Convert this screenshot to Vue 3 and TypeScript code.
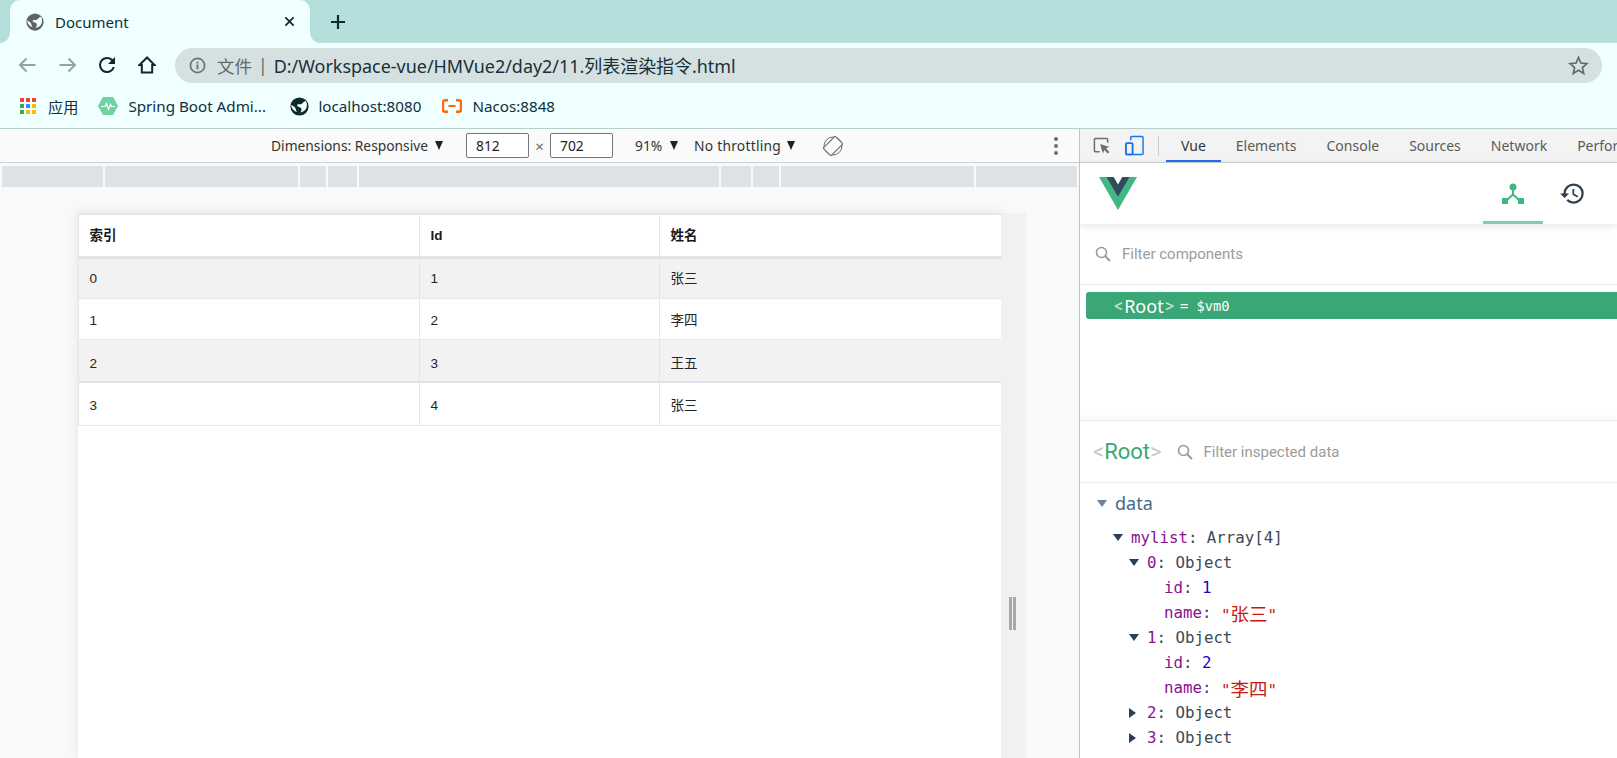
<script setup lang="ts">
interface Row { index: number; id: number; name: string }
const rows: Row[] = [
  { index: 0, id: 1, name: '张三' },
  { index: 1, id: 2, name: '李四' },
  { index: 2, id: 3, name: '王五' },
  { index: 3, id: 4, name: '张三' },
]
const segments = [101, 193, 26, 29, 360, 30, 26, 193, 101]
const tabs = ['Vue', 'Elements', 'Console', 'Sources', 'Network', 'Performance']
</script>

<template>
  <div class="browser">
    <header class="tabstrip">
      <div class="tab">
        <svg class="tab-globe" viewBox="0 0 24 24"><circle cx="12" cy="12" r="11.5" fill="#5f6368" /><path d="M20 5c-3 .5-3.500 2.500-5 3.500-2 1.300-4 .2-5.500 1-1 .6-.5 2 .5 2.500 2 1 4 1 4.500 3 .3 1.500-.5 3-1.500 4.500 2.500-.2 6-2 7.500-5 1.500-3.500 1-7-.5-9.500z" fill="#f0ffff" /><path d="M1.500 10c2 1 4 2 5 3.500s1 4 2.500 5.500c-3.500-1-7-4-7.500-9z" fill="#f0ffff" /></svg>
        <span class="tab-title">Document</span>
        <svg class="tab-close" viewBox="0 0 12 12"><path d="M1.500 1.500l9 9M10.500 1.500l-9 9" stroke="#0b2b2b" stroke-width="1.900" /></svg>
      </div>
      <svg class="new-tab" viewBox="0 0 16 16"><path d="M8 1v14M1 8h14" stroke="#0b2b2b" stroke-width="2.200" /></svg>
    </header>

    <div class="toolbar">
      <svg class="nav back" viewBox="0 0 18 16"><path d="M17.500 8H2M8.500 1.500L2 8l6.500 6.500" fill="none" stroke="#90a5a3" stroke-width="2" /></svg>
      <svg class="nav fwd" viewBox="0 0 18 16"><path d="M.5 8H16M9.500 1.500L16 8l-6.500 6.500" fill="none" stroke="#90a5a3" stroke-width="2" /></svg>
      <svg class="nav reload" viewBox="0 0 24 24"><path d="M17.650 6.350A7.960 7.960 0 0 0 12 4a8 8 0 1 0 7.740 10h-2.080A6 6 0 1 1 12 6c1.660 0 3.140.69 4.220 1.780L13 11h7V4l-2.350 2.350z" fill="#0b2b2b" /></svg>
      <svg class="nav home" viewBox="0 0 18 18"><path d="M9 1.500L1.500 9h2.300v7.500h10.400V9h2.300z" fill="none" stroke="#0b2b2b" stroke-width="2" stroke-linejoin="miter" /></svg>
      <div class="omnibox">
        <svg class="info" viewBox="0 0 18 18"><circle cx="9" cy="9" r="7.500" fill="none" stroke="#6b7473" stroke-width="1.800" /><path d="M9 8v5M9 5v1.800" stroke="#6b7473" stroke-width="2" /></svg>
        <span class="scheme">文件</span><span class="pipe">|</span>
        <span class="url">D:/Workspace-vue/HMVue2/day2/11.列表渲染指令.html</span>
        <svg class="star" viewBox="0 0 24 24"><path d="M12 2.800l2.700 6.400 6.900.6-5.200 4.500 1.600 6.800-6-3.600-6 3.600 1.600-6.800-5.200-4.500 6.900-.6z" fill="none" stroke="#5f6b6a" stroke-width="1.900" /></svg>
      </div>
    </div>

    <nav class="bookmarks">
      <svg class="apps" viewBox="0 0 16 16">
        <g fill="#ea4335"><rect x="0" y="0" width="4" height="4" /><rect x="6" y="0" width="4" height="4" /><rect x="12" y="0" width="4" height="4" /></g>
        <rect x="0" y="6" width="4" height="4" fill="#34a853" /><rect x="6" y="6" width="4" height="4" fill="#4285f4" /><rect x="12" y="6" width="4" height="4" fill="#fbbc05" />
        <rect x="0" y="12" width="4" height="4" fill="#34a853" /><rect x="6" y="12" width="4" height="4" fill="#fbbc05" /><rect x="12" y="12" width="4" height="4" fill="#fbbc05" />
      </svg>
      <span class="bm apps-label">应用</span>
      <svg class="spring" viewBox="0 0 20 18"><path d="M5 0h10l5 9-5 9H5L0 9z" fill="#6dd3a0" /><path d="M3 9.500h4l1.500-3 2 6 2-5 1 2h3.500" fill="none" stroke="#fff" stroke-width="1.200" /></svg>
      <span class="bm spring-label">Spring Boot Admi...</span>
      <svg class="bm-globe" viewBox="0 0 24 24"><circle cx="12" cy="12" r="11.500" fill="#0b2b2b" /><path d="M20 5c-3 .5-3.500 2.500-5 3.500-2 1.300-4 .2-5.500 1-1 .6-.5 2 .5 2.500 2 1 4 1 4.500 3 .3 1.500-.5 3-1.500 4.500 2.500-.2 6-2 7.500-5 1.500-3.500 1-7-.5-9.500z" fill="#f0ffff" /><path d="M1.500 10c2 1 4 2 5 3.500s1 4 2.500 5.500c-3.500-1-7-4-7.500-9z" fill="#f0ffff" /></svg>
      <span class="bm local-label">localhost:8080</span>
      <svg class="nacos" viewBox="0 0 20 14"><path d="M6 1.200H3a2 2 0 0 0-2 2v7.600a2 2 0 0 0 2 2h3M14 1.200h3a2 2 0 0 1 2 2v7.600a2 2 0 0 1-2 2h-3" fill="none" stroke="#ff6a00" stroke-width="2.400" /><path d="M6.500 7h7" stroke="#ff6a00" stroke-width="2" /></svg>
      <span class="bm">Nacos:8848</span>
    </nav>

    <main class="workspace">
      <section class="viewport-pane">
        <div class="emu-bar">
          <span class="emu-text dims">Dimensions: Responsive</span><i class="caret" />
          <input class="dim-input first" value="812" readonly />
          <span class="times">×</span>
          <input class="dim-input" value="702" readonly />
          <span class="emu-text zoom">91%</span><i class="caret" />
          <span class="emu-text throttle">No throttling</span><i class="caret" />
          <svg class="rotate" viewBox="0 0 20 20"><circle cx="10" cy="10" r="9" fill="none" stroke="#6e6e6e" stroke-width="1" /><rect x="4.500" y="1.500" width="11" height="17" rx="1" transform="rotate(45 10 10)" fill="#f9faf9" stroke="#6e6e6e" stroke-width="1.200" /></svg>
          <div class="kebab"><i /><i /><i /></div>
        </div>
        <div class="media-strip">
          <div v-for="(w, i) in segments" :key="i" class="segment" :style="{ width: w + 'px' }" />
        </div>
        <div class="canvas">
          <div class="page">
            <table class="grid">
              <colgroup><col class="c1" /><col class="c2" /><col class="c3" /></colgroup>
              <thead>
                <tr><th>索引</th><th>Id</th><th>姓名</th></tr>
              </thead>
              <tbody>
                <tr v-for="r in rows" :key="r.index">
                  <td>{{ r.index }}</td><td>{{ r.id }}</td><td>{{ r.name }}</td>
                </tr>
              </tbody>
            </table>
          </div>
          <div class="resizer"><div class="handle" /></div>
        </div>
      </section>

      <aside class="devtools">
        <div class="dt-tabs">
          <svg class="inspect" viewBox="0 0 18 18"><path d="M7 15.500H2.500a1 1 0 0 1-1-1v-12a1 1 0 0 1 1-1h12a1 1 0 0 1 1 1V6" fill="none" stroke="#6e6e6e" stroke-width="1.600" /><path d="M7.500 7.500l10 3-3.800 1.500 3.600 3.800-1.700 1.700-3.600-3.800-1.500 3.800z" fill="#6e6e6e" /></svg>
          <svg class="device" viewBox="0 0 20 21"><path d="M6 5V2a1 1 0 0 1 1-1h11a1 1 0 0 1 1 1v17a1 1 0 0 1-1 1H8" fill="none" stroke="#1a73e8" stroke-width="1.500" /><rect x="1" y="8" width="7" height="12" rx="1" fill="none" stroke="#1a73e8" stroke-width="2" /></svg>
          <i class="dt-sep" />
          <span v-for="(t, i) in tabs" :key="t" class="dt-tab" :class="{ active: i === 0 }">{{ t }}</span>
        </div>

        <div class="vue-head">
          <svg class="vue-logo" viewBox="0 0 261.760 226.690"><path d="M161.096.001l-30.225 52.351L100.647.001H-.005l130.876 226.688L261.749.001z" fill="#41b883" /><path d="M161.096.001l-30.225 52.351L100.647.001H52.346l78.526 136.010L209.398.001z" fill="#34495e" /></svg>
          <div class="vue-tab on">
            <svg viewBox="0 0 22 22" class="tree-icon"><circle cx="11" cy="4" r="3.500" fill="#3cb881" /><path d="M11 6v6M11 11.500L5 17M11 11.500L17 17" stroke="#3cb881" stroke-width="2" fill="none" /><rect x="0" y="15" width="6" height="6" fill="#3cb881" /><rect x="16" y="15" width="6" height="6" fill="#3cb881" /></svg>
          </div>
          <div class="vue-tab">
            <svg viewBox="0 0 24 24" class="hist-icon"><path d="M13 3a9 9 0 0 0-9 9H1l3.890 3.890.07.14L9 12H6c0-3.870 3.130-7 7-7s7 3.130 7 7-3.130 7-7 7c-1.930 0-3.680-.79-4.940-2.060l-1.420 1.420A8.954 8.954 0 0 0 13 21a9 9 0 0 0 0-18zm-1 5v5l4.280 2.540.72-1.210-3.500-2.080V8H12z" fill="#2c3e50" /></svg>
          </div>
        </div>

        <div class="filter tree-filter">
          <svg class="search" viewBox="0 0 16 16"><circle cx="6.500" cy="6.500" r="5" fill="none" stroke="#9a9a9a" stroke-width="1.600" /><path d="M10 10l5 5" stroke="#9a9a9a" stroke-width="2" /></svg>
          <span class="filter-text">Filter components</span>
        </div>
        <div class="tree-pane">
          <div class="root-row">
            <span class="ang">&lt;</span><span class="root-name">Root</span><span class="ang">&gt;</span>
            <span class="vm">= $vm0</span>
          </div>
        </div>

        <div class="inspector">
          <div class="insp-head">
            <span class="big-ang">&lt;</span><span class="big-root">Root</span><span class="big-ang">&gt;</span>
            <svg class="search insp-search" viewBox="0 0 16 16"><circle cx="6.500" cy="6.500" r="5" fill="none" stroke="#9a9a9a" stroke-width="1.600" /><path d="M10 10l5 5" stroke="#9a9a9a" stroke-width="2" /></svg>
            <span class="filter-text">Filter inspected data</span>
          </div>
          <div class="state">
            <div class="section-title"><i class="tri down gray" /><span>data</span></div>
            <div class="line l1"><i class="tri down" /><span class="k">mylist</span><span class="p">: Array[4]</span></div>
            <div class="line l2"><i class="tri down" /><span class="k">0</span><span class="p">: Object</span></div>
            <div class="line l3"><span class="k">id</span><span class="p">: </span><span class="n">1</span></div>
            <div class="line l3"><span class="k">name</span><span class="p">: </span><span class="s">"<span class="zh">张三</span>"</span></div>
            <div class="line l2"><i class="tri down" /><span class="k">1</span><span class="p">: Object</span></div>
            <div class="line l3"><span class="k">id</span><span class="p">: </span><span class="n">2</span></div>
            <div class="line l3"><span class="k">name</span><span class="p">: </span><span class="s">"<span class="zh">李四</span>"</span></div>
            <div class="line l2"><i class="tri right" /><span class="k">2</span><span class="p">: Object</span></div>
            <div class="line l2"><i class="tri right" /><span class="k">3</span><span class="p">: Object</span></div>
          </div>
        </div>
      </aside>
    </main>
  </div>
</template>

<style>
html, body { margin: 0; overflow: hidden; background: #fff; }
</style>

<style scoped>
.browser {
  width: 1617px; height: 758px; overflow: hidden;
  display: flex; flex-direction: column;
  font-family: "Noto Sans", "Noto Sans CJK SC", sans-serif;
  color: #0b2b2b; background: #f0ffff;
}
svg { display: block; flex: none; }

/* tab strip */
.tabstrip { height: 43px; flex: none; background: #b4dfdd; display: flex; align-items: stretch; }
.tab {
  position: relative; margin-left: 10px; width: 300px; background: #f0ffff;
  border-radius: 10px 10px 0 0; display: flex; align-items: center;
}
.tab::before, .tab::after {
  content: ""; position: absolute; bottom: 0; width: 10px; height: 10px; background: #f0ffff;
}
.tab::before { left: -10px; -webkit-mask: radial-gradient(circle at 0 0, transparent 9.500px, #000 10px); mask: radial-gradient(circle at 0 0, transparent 9.500px, #000 10px); }
.tab::after { right: -10px; -webkit-mask: radial-gradient(circle at 100% 0, transparent 9.500px, #000 10px); mask: radial-gradient(circle at 100% 0, transparent 9.500px, #000 10px); }
.tab-globe { width: 18px; height: 18px; margin-left: 16px; }
.tab-title { margin-left: 11px; font-size: 15px; flex: 1; color: #0f2f33; }
.tab-close { width: 11px; height: 11px; margin-right: 15px; }
.new-tab { width: 16px; height: 16px; margin: 14px 0 0 20px; }

/* toolbar */
.toolbar { height: 43px; flex: none; display: flex; align-items: center; padding-top: 1px; box-sizing: border-box; }
.nav { flex: none; }
.back { width: 18px; height: 16px; margin-left: 18px; }
.fwd { width: 18px; height: 16px; margin-left: 23px; }
.reload { width: 24px; height: 24px; margin-left: 18px; }
.home { width: 18px; height: 18px; margin-left: 19px; }
.omnibox {
  margin-left: 19px; width: 1427px; height: 35px; border-radius: 18px; background: #d5e1e0;
  display: flex; align-items: center; box-sizing: border-box;
}
.info { width: 17px; height: 17px; margin-left: 14px; }
.scheme { margin-left: 11px; font-size: 17.500px; color: #5f6b6a; }
.pipe { margin-left: 6px; font-size: 17.500px; color: #5f6b6a; }
.url { margin-left: 6px; font-size: 17.950px; color: #18303a; flex: 1; white-space: nowrap; }
.star { width: 21px; height: 21px; margin-right: 13px; }

/* bookmarks */
.bookmarks { height: 40px; padding-bottom: 2px; flex: none; display: flex; align-items: center; border-bottom: 1px solid #b9cdcd; box-sizing: content-box; font-size: 15.200px; }
.apps { width: 16px; height: 16px; margin-left: 20px; }
.bm { color: #12303a; white-space: nowrap; }
.apps-label { margin-left: 12px; }
.spring { width: 20px; height: 18px; margin-left: 20px; }
.spring-label { margin-left: 10px; width: 144px; }
.bm-globe { width: 19px; height: 19px; margin-left: 18px; }
.local-label { margin-left: 9px; width: 104px; }
.nacos { width: 20px; height: 14px; margin-left: 20px; margin-right: 10px; }

/* workspace */
.workspace { flex: 1; min-height: 0; display: flex; background: #fff; }
.viewport-pane { width: 1079px; flex: none; display: flex; flex-direction: column; background: #f8faf9; border-right: 1px solid #bfc4c6; box-sizing: content-box; }

.emu-bar { height: 33px; flex: none; display: flex; align-items: center; background: #f9faf9; border-bottom: 1px solid #cbd0d2; font-size: 13.800px; color: #333; }
.emu-text { white-space: nowrap; }
.dims { margin-left: 271px; width: 158px; }
.caret { width: 0; height: 0; border-left: 4.500px solid transparent; border-right: 4.500px solid transparent; border-top: 9px solid #222; margin-left: 6px; flex: none; }
.dim-input {
  width: 63px; height: 25px; box-sizing: border-box; border: 1px solid #777; border-radius: 2px; background: #fff;
  padding: 0 0 0 9px; font: 13.800px "Noto Sans", sans-serif; color: #222; outline: 0;
}
.dim-input.first { margin-left: 23px; }
.times { width: 21px; text-align: center; color: #666; font-size: 15px; }
.zoom { margin-left: 22px; width: 29px; }
.throttle { margin-left: 16px; width: 87px; letter-spacing: .25px; }
.rotate { width: 20px; height: 20px; margin-left: 28px; }
.kebab { margin-left: 211px; display: flex; flex-direction: column; gap: 3px; }
.kebab i { display: block; width: 4px; height: 4px; border-radius: 50%; background: #6e6e6e; }

.media-strip { display: flex; gap: 2px; padding: 3px 0 0 2px; flex: none; }
.segment { height: 21px; background: #dee1e5; flex: none; }

.canvas { flex: 1; min-height: 0; display: flex; align-items: stretch; padding: 26px 0 0 78px; }
.page { width: 923px; background: #fff; box-shadow: 0 0 10px rgba(60, 64, 67, .12); }
.resizer { width: 25px; background: #f0f1f3; display: flex; justify-content: center; align-items: flex-start; padding-top: 384px; box-sizing: border-box; }
.handle { width: 7px; height: 33px; box-sizing: border-box; border-left: 3px solid #a8a8a8; border-right: 3px solid #a8a8a8; margin-right: 2px; }

.grid { width: 923px; table-layout: fixed; border-collapse: collapse; font-family: "Liberation Sans", "Noto Sans CJK SC", sans-serif; font-size: 13.500px; line-height: 16px; color: #212529; }
.c1 { width: 341px; }
.c2 { width: 240px; }
.c3 { width: 342px; }
.grid th, .grid td { border: 1px solid #e4e6e9; padding: 0 0 0 10.500px; text-align: left; vertical-align: middle; }
.grid th { height: 41px; font-weight: 700; border-top-width: 2px; border-bottom: 3px solid #e0e2e7; color: #16181b; }
.grid td { height: 41px; box-sizing: border-box; }
.grid tbody tr:nth-child(odd) td { background: #f2f2f2; }
.grid tbody tr:nth-child(2) td { padding-top: 3px; }
.grid tbody tr:nth-child(3) td { height: 42px; border-bottom: 2px solid #dfe2e6; padding-top: 7px; }
.grid tbody tr:nth-child(4) td { height: 44px; padding-top: 4px; }

/* devtools */
.devtools { flex: 1; min-width: 0; overflow: hidden; display: flex; flex-direction: column; background: #fff; }
.dt-tabs { height: 33px; flex: none; background: #f3f3f3; border-bottom: 1px solid #cbd0d2; display: flex; align-items: center; white-space: nowrap; }
.inspect { width: 17px; height: 17px; margin-left: 13px; }
.device { width: 19px; height: 21px; margin-left: 15px; }
.dt-sep { width: 1px; height: 20px; background: #ccc; margin-left: 14px; flex: none; }
.dt-tab { height: 33px; line-height: 34px; padding: 0 15px; font-size: 14px; color: #5a5a5a; flex: none; box-sizing: border-box; }
.dt-tab:first-of-type { margin-left: 7px; }
.dt-tab.active { color: #333; border-bottom: 2px solid #1a73e8; }

.vue-head { height: 61px; flex: none; display: flex; position: relative; box-shadow: 0 2px 8px rgba(0, 0, 0, .1); background: #fff; z-index: 1; }
.vue-logo { width: 38px; height: 33px; margin: 14px 0 0 19px; }
.vue-tab { height: 61px; width: 60px; box-sizing: border-box; display: flex; align-items: flex-start; justify-content: center; padding-top: 20px; }
.vue-tab.on { margin-left: 346px; border-bottom: 3px solid #7bd0a8; }
.vue-tab + .vue-tab { margin-left: -1px; }
.tree-icon { width: 22px; height: 22px; }
.hist-icon { width: 27px; height: 27px; margin-top: -3px; }

.filter { display: flex; align-items: center; }
.tree-filter { height: 61px; flex: none; border-bottom: 1px solid #eceeef; box-sizing: border-box; }
.search { width: 16px; height: 16px; margin-left: 15px; }
.filter-text { margin-left: 11px; font-size: 15px; color: #9b9b9b; font-family: "Roboto", sans-serif; }

.tree-pane { height: 135px; flex: none; padding: 7px 0 0 6px; box-sizing: border-box; }
.root-row { height: 27px; background: #3ba776; border-radius: 3px 0 0 3px; display: flex; align-items: center; padding-left: 28px; color: #fff; }
.ang { color: #c5e3d3; font-size: 18px; font-family: "Roboto", sans-serif; }
.root-name { font-size: 18px; font-family: "Noto Sans", sans-serif; margin: 0 1px; }
.vm { margin-left: 6px; font: 13.700px "DejaVu Sans Mono", monospace; color: #fff; }

.inspector { flex: 1; min-height: 0; border-top: 1px solid #e8eaeb; box-shadow: 0 -2px 6px rgba(0, 0, 0, .04); }
.insp-head { height: 62px; display: flex; align-items: center; padding-left: 13px; border-bottom: 1px solid #eceeef; box-sizing: border-box; }
.big-ang { color: #c4c8c9; font-size: 22px; font-family: "Roboto", sans-serif; }
.big-root { color: #3ba776; font-size: 22px; font-family: "Roboto", sans-serif; }
.insp-search { margin-left: 15px; }

.state { padding-top: 6px; }
.section-title { height: 28px; display: flex; align-items: center; font-size: 18px; color: #486887; padding-left: 17px; margin-bottom: 8px; }
.section-title span { margin-left: 8px; }
.line { height: 25px; display: flex; align-items: center; white-space: pre; font: 15.750px "DejaVu Sans Mono", "Noto Sans CJK SC", monospace; color: #3b4a55; }
.l1 { padding-left: 33px; }
.l2 { padding-left: 49px; }
.l3 { padding-left: 84px; }
.tri { width: 0; height: 0; flex: none; }
.tri.down { border-left: 5px solid transparent; border-right: 5px solid transparent; border-top: 7px solid #2c3e50; margin-right: 8px; }
.tri.down.gray { border-top-color: #6f8296; margin-right: 0; }
.tri.right { border-top: 5px solid transparent; border-bottom: 5px solid transparent; border-left: 7px solid #2c3e50; margin-right: 11px; }
.k { color: #881391; }
.n { color: #1c00cf; }
.s { color: #c41a16; }
.zh { font-size: 18.500px; }
.p { color: #3b4a55; }
</style>
